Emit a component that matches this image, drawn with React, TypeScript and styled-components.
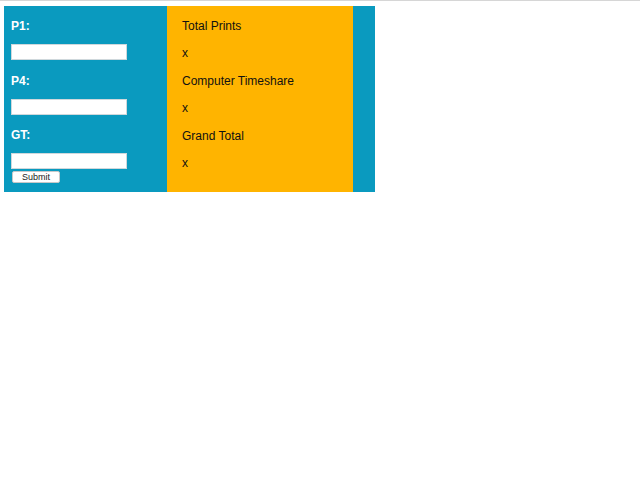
import React from 'react';
import styled, { createGlobalStyle } from 'styled-components';

const GlobalStyle = createGlobalStyle`
  body {
    margin: 0;
    font-family: "Liberation Sans", Arial, sans-serif;
    background: #ffffff;
  }
`;

const TopRule = styled.div`
  height: 1px;
  background: #d6d6d6;
`;

const Wrapper = styled.div`
  display: flex;
  align-items: stretch;
  width: 371px;
  margin: 5px 0 0 4px;
  background: #0a9abf;
`;

const FormColumn = styled.form`
  display: flex;
  flex-direction: column;
  align-items: flex-start;
  width: 163px;
  box-sizing: border-box;
  padding: 13px 0 9px 7px;
`;

const FieldLabel = styled.label`
  color: #ffffff;
  font-size: 12px;
  font-weight: bold;
  line-height: 15px;
  margin-bottom: 10px;
`;

const Field = styled.input<{ $last?: boolean }>`
  width: 116px;
  height: 16px;
  box-sizing: border-box;
  margin: 0 0 ${(p) => (p.$last ? '1.5px' : '13.5px')} 0;
  border: 1px solid #cfd8dc;
  background: #ffffff;
  padding: 0 3px;
`;

const SubmitButton = styled.button`
  width: 48px;
  height: 12px;
  margin-left: 1px;
  padding: 0;
  border: 1px solid #c8c8c8;
  border-radius: 2px;
  background: #ffffff;
  color: #222222;
  font-family: "Liberation Sans", Arial, sans-serif;
  font-size: 9px;
  line-height: 10px;
`;

const ResultPanel = styled.div`
  display: flex;
  flex-direction: column;
  gap: 12.4px;
  width: 186px;
  box-sizing: border-box;
  padding: 13px 0 0 15px;
  background: #ffb400;
`;

const ResultLine = styled.div`
  color: #111111;
  font-size: 12px;
  line-height: 15px;
`;

const App: React.FC = () => {
  const results = ['Total Prints', 'x', 'Computer Timeshare', 'x', 'Grand Total', 'x'];
  return (
    <>
      <GlobalStyle />
      <TopRule />
      <Wrapper>
        <FormColumn onSubmit={(e) => e.preventDefault()}>
          <FieldLabel>P1:</FieldLabel>
          <Field type="text" />
          <FieldLabel>P4:</FieldLabel>
          <Field type="text" />
          <FieldLabel>GT:</FieldLabel>
          <Field type="text" $last />
          <SubmitButton type="submit">Submit</SubmitButton>
        </FormColumn>
        <ResultPanel>
          {results.map((r, i) => (
            <ResultLine key={i}>{r}</ResultLine>
          ))}
        </ResultPanel>
      </Wrapper>
    </>
  );
};

export default App;
